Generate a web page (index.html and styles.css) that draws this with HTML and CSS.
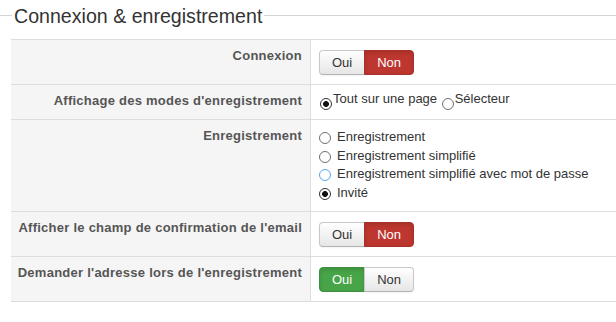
FILE: index.html
```html
<!DOCTYPE html>
<html lang="fr">
<head>
<meta charset="utf-8">
<link rel="stylesheet" href="styles.css">
</head>
<body>
<div class="legend"><span class="line short"></span><span class="legend-text">Connexion &amp; enregistrement</span><span class="line long"></span></div>
<div class="form">
  <div class="row">
    <div class="label">Connexion</div>
    <div class="value btns"><span class="btn first">Oui</span><span class="btn last danger">Non</span></div>
  </div>
  <div class="row">
    <div class="label">Affichage des modes d'enregistrement</div>
    <div class="value inline"><span class="radio low checked"></span>Tout sur une page <span class="radio low"></span>Sélecteur</div>
  </div>
  <div class="row">
    <div class="label">Enregistrement</div>
    <div class="value list">
      <div class="opt"><span class="radio"></span>Enregistrement</div>
      <div class="opt"><span class="radio"></span>Enregistrement simplifié</div>
      <div class="opt"><span class="radio focus"></span>Enregistrement simplifié avec mot de passe</div>
      <div class="opt"><span class="radio checked"></span>Invité</div>
    </div>
  </div>
  <div class="row">
    <div class="label">Afficher le champ de confirmation de l'email</div>
    <div class="value btns"><span class="btn first">Oui</span><span class="btn last danger">Non</span></div>
  </div>
  <div class="row lastrow">
    <div class="label">Demander l'adresse lors de l'enregistrement</div>
    <div class="value btns"><span class="btn first success">Oui</span><span class="btn last">Non</span></div>
  </div>
</div>
</body>
</html>
```
FILE: styles.css
```css
html, body {
  margin: 0;
  padding: 0;
  background: #fff;
  font-family: "Liberation Sans", Arial, sans-serif;
  color: #333;
}
.legend {
  display: flex;
  align-items: center;
  height: 31px;
}
.line {
  height: 1px;
  background: #d4d4d4;
}
.line.short { width: 12px; }
.line.long { flex: 1; }
.legend-text {
  font-size: 19.6px;
  color: #333;
  padding: 0 2px 0 2px;
  line-height: 24px;
}
.form {
  margin: 8px 0 0 11px;
  border-bottom: 1px solid #ddd;
}
.row {
  display: grid;
  grid-template-columns: 300px 1fr;
  border-top: 1px solid #ddd;
}
.label {
  background: #f5f5f5;
  border-right: 1px solid #ddd;
  text-align: right;
  font-weight: bold;
  font-size: 13px;
  letter-spacing: 0.25px;
  line-height: 18px;
  color: #555;
  padding: 7px 8px 0 0;
}
.value {
  font-size: 13px;
  line-height: 18px;
  color: #333;
  padding-left: 8px;
}
.btns {
  padding-top: 10px;
  padding-bottom: 9px;
  display: flex;
}
.btn {
  display: block;
  padding: 4px 12px;
  line-height: 15px;
  font-size: 13px;
  color: #333;
  background: linear-gradient(#ffffff, #e6e6e6);
  border: 1px solid #c8c8c8;
  border-bottom-color: #b3b3b3;
  box-shadow: inset 0 1px 0 rgba(255,255,255,.2), 0 1px 2px rgba(0,0,0,.05);
}
.btn.first { border-radius: 4px 0 0 4px; }
.btn.last { border-radius: 0 4px 4px 0; margin-left: -1px; }
.btn.danger {
  background: #bd362f;
  border-color: #a8302a;
  color: #fff;
  box-shadow: inset 0 2px 4px rgba(0,0,0,.12);
}
.btn.success {
  background: #47a447;
  border-color: #3e8f3e;
  color: #fff;
  box-shadow: inset 0 2px 4px rgba(0,0,0,.12);
}
.inline {
  padding-top: 5px;
  padding-bottom: 9px;
}
.list {
  padding-top: 8px;
  padding-bottom: 9px;
}
.opt {
  line-height: 18.5px;
}
.radio {
  display: inline-block;
  box-sizing: border-box;
  width: 12px;
  height: 12px;
  border-radius: 50%;
  border: 1px solid #6f6f6f;
  background: #fff;
  vertical-align: -3px;
}
.list .radio {
  margin-right: 6px;
}
.radio.low {
  vertical-align: -7px;
  margin-left: 1px;
  margin-right: 1px;
}
.radio.checked {
  border-color: #333;
  background: radial-gradient(circle, #111 0, #111 2.6px, #fff 3.2px);
}
.radio.focus {
  border-color: #5aa3ea;
}
```
